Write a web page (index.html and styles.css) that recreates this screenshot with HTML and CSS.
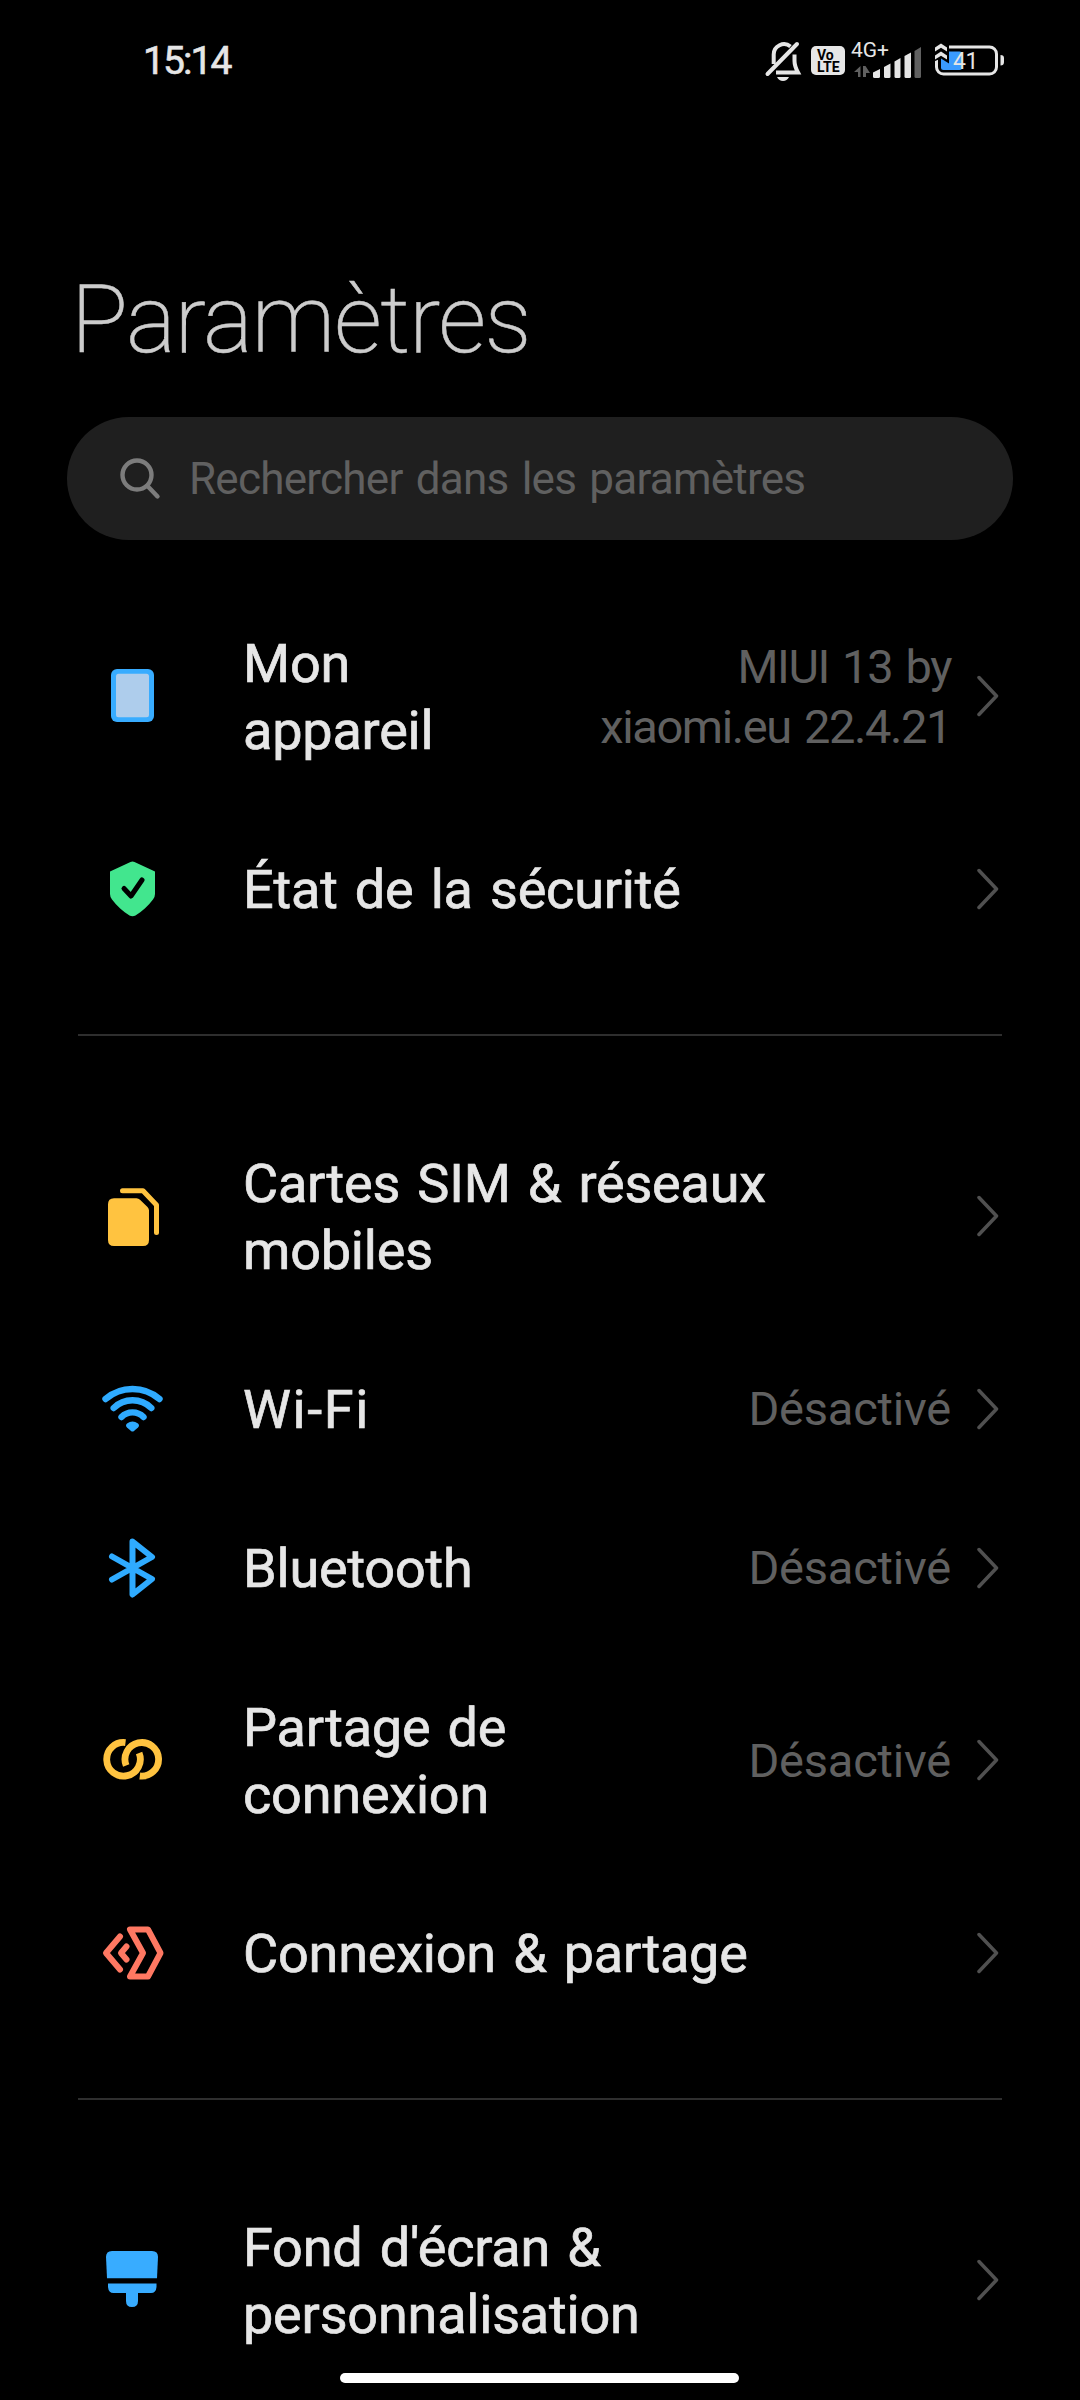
FILE: index.html
```
<!DOCTYPE html>
<html lang="fr">
<head>
  <meta charset="UTF-8" />
  <meta name="viewport" content="width=device-width, initial-scale=1.0" />
  <title>Paramètres</title>
  <link rel="stylesheet" href="styles.css">
</head>
<body>
  <header class="status-bar">
    <span class="clock">15:14</span>
    <div class="status-icons">
      <svg class="bell" width="38" height="42" viewBox="0 0 38 42" fill="none" stroke="#e6e6e6" stroke-width="4">
        <path d="M9.7 25V15.500A10.300 10.300 0 0 1 26.500 7.500M30.500 15.500V22Q30.500 27 34 33.500H12" />
        <path d="M3.500 35L33 5" stroke-linecap="round" />
        <path d="M13 38H25Q23 42 19 42T13 38Z" fill="#e6e6e6" stroke="none" />
      </svg>
      <div class="volte"><span>Vo</span><span>LTE</span></div>
      <div class="signal">
        <span class="network">4G+</span>
        <svg width="70" height="32" viewBox="0 0 70 32">
          <path d="M0 25L6.500 19V30H4V25ZM9 19H11.500L16 26H12V30H9Z" fill="#606060" />
          <g fill="#e6e6e6">
            <path d="M19 25.500L26 22V29.500Q26 31 24.500 31H20.500Q19 31 19 29.500Z" />
            <path d="M30 20L36.500 16.500V29.500Q36.500 31 35 31H31.500Q30 31 30 29.500Z" />
            <path d="M40.500 14.500L46.500 11V29.500Q46.500 31 45 31H42Q40.500 31 40.500 29.500Z" />
            <path d="M50.500 9L57 5.500V29.500Q57 31 55.500 31H52Q50.500 31 50.500 29.500Z" />
          </g>
          <path d="M60.500 4L67 0V29.500Q67 31 65.500 31H62Q60.500 31 60.500 29.500Z" fill="#606060" />
        </svg>
      </div>
      <svg class="battery" width="72" height="38" viewBox="0 0 72 38">
        <rect x="2.500" y="6" width="60" height="27" rx="7" fill="none" stroke="#e6e6e6" stroke-width="3" />
        <path d="M66.500 14Q70 14 70 17V21Q70 24.500 66.500 24.500Z" fill="#e6e6e6" />
        <rect x="7" y="10.500" width="21" height="18.500" rx="2.500" fill="#3a9bff" />
        <path d="M-1 0H15V22.500L7 17.500L-1 21Z" fill="#000" />
        <path d="M1 6.500L7 2.500L13 6.500V10.500L7 6.700L1 10.500ZM1 14.500L7 10.500L13 14.500V18.500L7 14.700L1 18.500Z" fill="#e6e6e6" />
        <text x="19" y="28">41</text>
      </svg>
    </div>
  </header>

  <h1>Paramètres</h1>

  <div class="search">
    <svg width="42" height="44" viewBox="0 0 42 44" fill="none" stroke="#7c7c7c" stroke-width="4.400" stroke-linecap="round">
      <circle cx="18" cy="18" r="14.500" />
      <path d="M28.500 29L38.500 39.500" />
    </svg>
    <span>Rechercher dans les paramètres</span>
  </div>

  <main>
    <section class="group">
      <div class="row">
        <svg class="icon" viewBox="0 0 66 66">
          <rect x="11" y="6" width="43" height="53" rx="6" fill="#38acff" />
          <rect x="16" y="10.700" width="33" height="43.500" rx="2.500" fill="#aecdec" />
        </svg>
        <div class="label">Mon<br>appareil</div>
        <div class="value version">MIUI 13 by<br>xiaomi.eu 22.4.21</div>
        <svg class="chevron" viewBox="0 0 22 42"><path d="M2 2.500L19.500 21L2 39.500" /></svg>
      </div>
      <div class="row">
        <svg class="icon" viewBox="0 0 66 66">
          <path d="M30.500 6Q32.500 5 34.500 6L55 15.500V38Q55 41 53 43.500C48 50 42 55.500 35.500 59.500Q32.500 61 29.500 59.500C23 55.500 17 50 12 43.500Q10 41 10 38V15.500Z" fill="#42e68e" />
          <path d="M24 32.500L31 40L42 24" fill="none" stroke="#000" stroke-width="5" stroke-linecap="round" stroke-linejoin="round" />
        </svg>
        <div class="label">État de la sécurité</div>
        <svg class="chevron" viewBox="0 0 22 42"><path d="M2 2.500L19.500 21L2 39.500" /></svg>
      </div>
    </section>

    <section class="group">
      <div class="row">
        <svg class="icon" viewBox="0 0 66 66">
          <path d="M14 15.300H36.500Q38.500 15.300 40 16.800L47.500 24Q49 25.500 49 27.500V57Q49 63 43 63H14Q8 63 8 57V21.300Q8 15.300 14 15.300Z" fill="#ffc340" />
          <path d="M22.500 7.700H43L56.500 22V49.500" fill="none" stroke="#ffc340" stroke-width="5" stroke-linecap="round" stroke-linejoin="round" />
        </svg>
        <div class="label">Cartes SIM &amp; réseaux<br>mobiles</div>
        <svg class="chevron" viewBox="0 0 22 42"><path d="M2 2.500L19.500 21L2 39.500" /></svg>
      </div>
      <div class="row">
        <svg class="icon" viewBox="0 0 66 66">
          <g fill="none" stroke="#2fabff" stroke-width="6.400" stroke-linecap="round">
            <path d="M5.500 23A41.500 41.500 0 0 1 59.500 23" />
            <path d="M13.700 32A26.800 26.800 0 0 1 51.300 32" />
            <path d="M21.500 41A15.500 15.500 0 0 1 43.500 41" />
          </g>
          <path d="M27 47.500Q32.500 43.500 38 47.500Q40 49.500 38 51.500L34 55Q32.500 56.200 31 55L27 51.500Q25 49.500 27 47.500Z" fill="#2fabff" />
        </svg>
        <div class="label wifi">Wi-Fi</div>
        <div class="value">Désactivé</div>
        <svg class="chevron" viewBox="0 0 22 42"><path d="M2 2.500L19.500 21L2 39.500" /></svg>
      </div>
      <div class="row">
        <svg class="icon" viewBox="0 0 66 66" fill="none" stroke="#2fabff" stroke-width="6" stroke-linecap="round" stroke-linejoin="round">
          <path d="M12 21.500L52 44L32.500 59.500V6.500L52 22L12 44.500" />
        </svg>
        <div class="label">Bluetooth</div>
        <div class="value">Désactivé</div>
        <svg class="chevron" viewBox="0 0 22 42"><path d="M2 2.500L19.500 21L2 39.500" /></svg>
      </div>
      <div class="row">
        <svg class="icon" viewBox="0 0 66 66" fill="none" stroke="#ffc340" stroke-width="6.800">
          <path d="M25.500 15.600A16.800 16.800 0 1 0 39.100 26" />
          <path d="M39.800 49A16.800 16.800 0 1 0 26.200 38.600" />
        </svg>
        <div class="label">Partage de<br>connexion</div>
        <div class="value">Désactivé</div>
        <svg class="chevron" viewBox="0 0 22 42"><path d="M2 2.500L19.500 21L2 39.500" /></svg>
      </div>
      <div class="row">
        <svg class="icon" viewBox="0 0 66 66" fill="none" stroke="#ff7862" stroke-width="6" stroke-linecap="round" stroke-linejoin="round">
          <path d="M20 16.500L6 33L20 49.500" />
          <path d="M26.500 26.500L21 33L26.500 39.500" />
          <path d="M30 9.500H48L60.500 33L48 56.500H30L43 33Z" />
        </svg>
        <div class="label">Connexion &amp; partage</div>
        <svg class="chevron" viewBox="0 0 22 42"><path d="M2 2.500L19.500 21L2 39.500" /></svg>
      </div>
    </section>

    <section class="group">
      <div class="row">
        <svg class="icon" viewBox="0 0 66 66" fill="#38acff">
          <path d="M12 4H52Q58 4 58 10L57 31.300H7L6 10Q6 4 12 4Z" />
          <path d="M8 36.500H56.500V40Q56 46 51 46H38V54Q38 60 32 60T26 54V46H13.500Q8.500 46 8 40Z" />
        </svg>
        <div class="label">Fond d'écran &amp;<br>personnalisation</div>
        <svg class="chevron" viewBox="0 0 22 42"><path d="M2 2.500L19.500 21L2 39.500" /></svg>
      </div>
    </section>
  </main>

  <div class="home-bar"></div>
</body>
</html>
```
FILE: styles.css
```
* {
  box-sizing: border-box;
}
html, body {
  margin: 0;
  padding: 0;
}
body {
  position: relative;
  width: 1080px;
  height: 2400px;
  overflow: hidden;
  background-color: #000;
  color: #e6e6e6;
  font-family: Roboto, "Noto Sans", sans-serif;
}
svg {
  flex: none;
  display: block;
}

/* status bar */
.status-bar {
  display: flex;
  justify-content: space-between;
  align-items: center;
  height: 120px;
  padding: 0 74px 0 143px;
}
.clock {
  padding-top: 2px;
  font-size: 39px;
  font-weight: 400;
  letter-spacing: -1.9px;
  -webkit-text-stroke: 0.6px #e6e6e6;
}
.status-icons {
  display: flex;
  align-items: center;
}
.bell {
  margin-right: 9px;
}
.volte {
  display: flex;
  flex-direction: column;
  width: 34px;
  height: 29px;
  margin-right: 6px;
  padding: 3px 0 0 6px;
  border-radius: 5px;
  background-color: #e6e6e6;
  color: #000;
  font-size: 14px;
  font-weight: 700;
  line-height: 12px;
}
.signal {
  position: relative;
  width: 83px;
  height: 38px;
}
.signal svg {
  margin: 6px 0 0 3px;
}
.network {
  position: absolute;
  left: 0;
  top: -1px;
  font-size: 21px;
  line-height: 21px;
}
.battery text {
  fill: #e6e6e6;
  font-size: 23px;
  letter-spacing: -0.5px;
}

/* title and search */
h1 {
  margin: 140px 0 0 71px;
  font-size: 94px;
  font-weight: 200;
  line-height: 120px;
  letter-spacing: -1.4px;
  color: #cccccc;
  -webkit-text-stroke: 0.5px #cccccc;
}
.search {
  display: flex;
  align-items: center;
  gap: 28px;
  height: 123px;
  margin: 37px 67px 0;
  padding-left: 52px;
  border-radius: 62px;
  background-color: #1f1f1f;
  color: #606060;
  font-size: 44px;
  font-weight: 400;
  letter-spacing: -0.75px;
  word-spacing: 3px;
}

/* settings list */
main {
  padding: 43px 78px 0;
}
.group + .group {
  margin-top: 66px;
  padding-top: 67px;
  border-top: 2px solid #2e2e2e;
}
.row {
  display: flex;
  align-items: center;
  padding: 46px 3px 46px 22px;
}
.icon {
  width: 66px;
  height: 66px;
  margin-right: 77px;
}
.label {
  flex: 1;
  margin: 1px 0 -1px;
  font-size: 54px;
  font-weight: 400;
  line-height: 67px;
  letter-spacing: -0.2px;
  word-spacing: 4px;
  white-space: nowrap;
  -webkit-text-stroke: 0.7px #e6e6e6;
}
.wifi {
  letter-spacing: 1.6px;
}
.value {
  margin: 0.5px 0 -0.5px;
  color: #606060;
  font-size: 47px;
  font-weight: 400;
  line-height: 60px;
  letter-spacing: -0.2px;
  text-align: right;
  white-space: nowrap;
}
.version {
  letter-spacing: -1.4px;
  word-spacing: 3px;
}
.chevron {
  width: 22px;
  height: 42px;
  margin-left: 26px;
  fill: none;
  stroke: #505050;
  stroke-width: 3.500;
  stroke-linecap: round;
  stroke-linejoin: round;
}

.home-bar {
  position: absolute;
  left: 340px;
  bottom: 17px;
  width: 399px;
  height: 10px;
  border-radius: 5px;
  background-color: #fff;
}
```
